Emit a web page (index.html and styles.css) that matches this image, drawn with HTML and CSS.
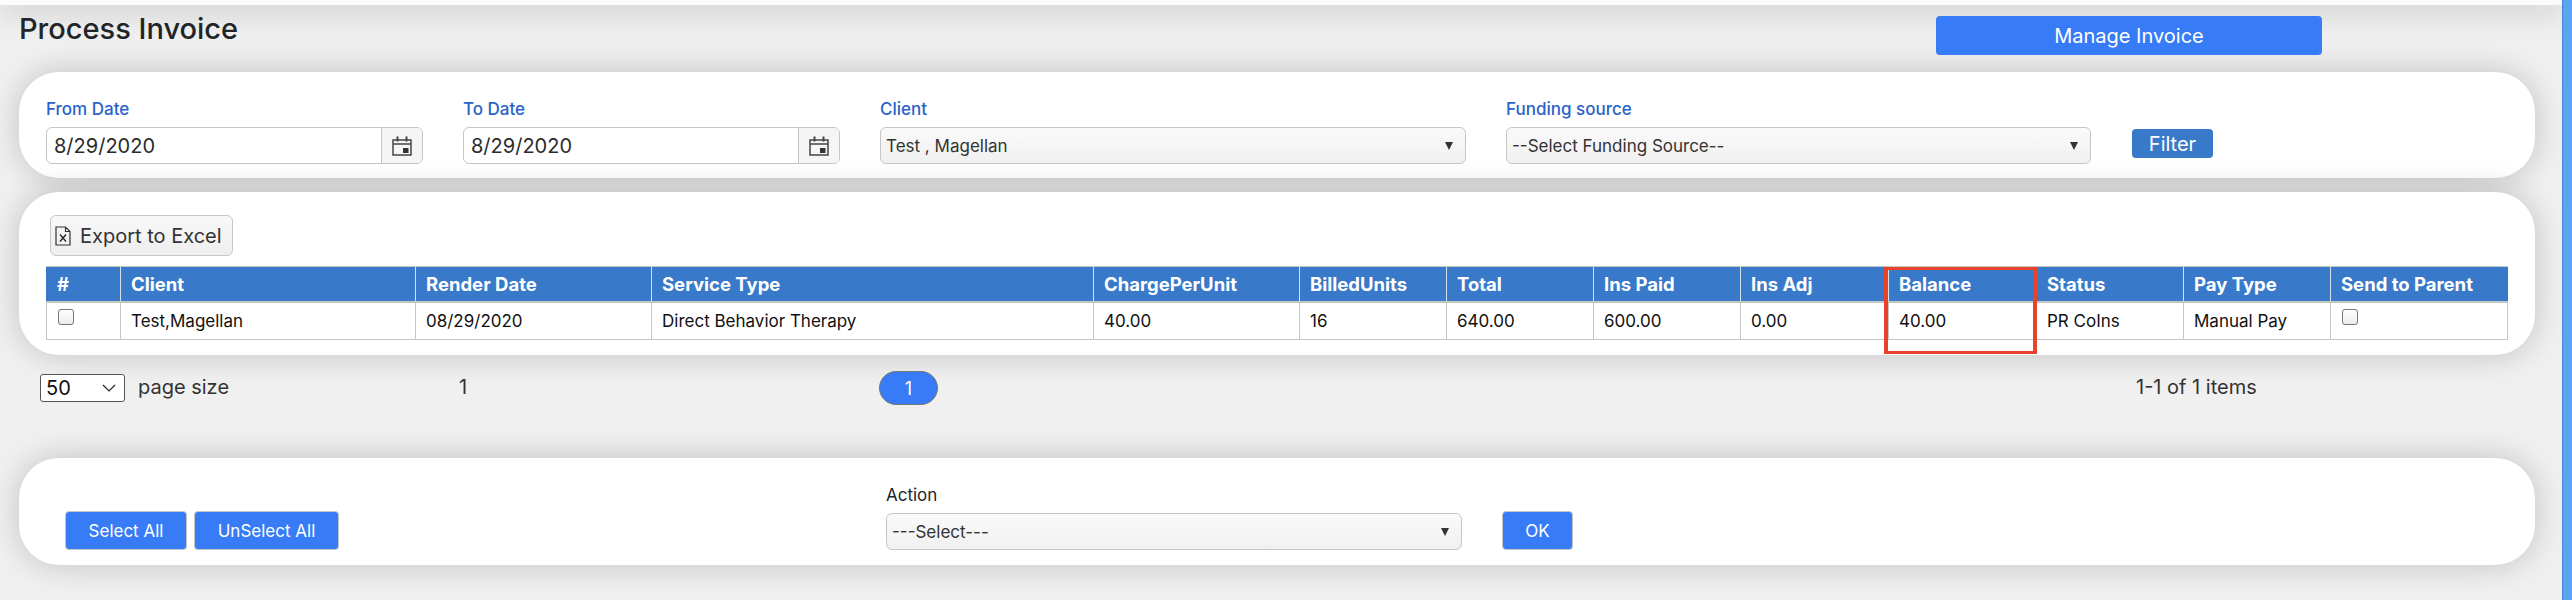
FILE: index.html
```html
<!DOCTYPE html>
<html lang="en">
<head>
<meta charset="utf-8">
<title>Process Invoice</title>
<link rel="stylesheet" href="styles.css">
</head>
<body>
<div class="app">
  <div class="main">
    <div class="topbar"></div>
    <header class="header">
      <h1 class="title">Process Invoice</h1>
      <button class="btn btn-manage" type="button">Manage Invoice</button>
    </header>

    <section class="panel panel-filter">
      <div class="field field-date">
        <label class="label label-blue">From Date</label>
        <div class="input-group">
          <input class="date-input" type="text" value="8/29/2020">
          <span class="addon">
            <svg class="cal" viewBox="0 0 20 20" width="20" height="20" aria-hidden="true">
              <path d="M1 4h18v15H1z M1 8h18" fill="none" stroke="#444" stroke-width="1.5"/>
              <path d="M5.5 0.5v5 M14.5 0.5v5" stroke="#444" stroke-width="2" fill="none"/>
              <rect x="11" y="12" width="5.5" height="5" fill="#333"/>
            </svg>
          </span>
        </div>
      </div>
      <div class="field field-date">
        <label class="label label-blue">To Date</label>
        <div class="input-group">
          <input class="date-input" type="text" value="8/29/2020">
          <span class="addon">
            <svg class="cal" viewBox="0 0 20 20" width="20" height="20" aria-hidden="true">
              <path d="M1 4h18v15H1z M1 8h18" fill="none" stroke="#444" stroke-width="1.5"/>
              <path d="M5.5 0.5v5 M14.5 0.5v5" stroke="#444" stroke-width="2" fill="none"/>
              <rect x="11" y="12" width="5.5" height="5" fill="#333"/>
            </svg>
          </span>
        </div>
      </div>
      <div class="field field-client">
        <label class="label label-blue">Client</label>
        <div class="select-wrap">
          <select class="select"><option>Test , Magellan</option></select>
        </div>
      </div>
      <div class="field field-funding">
        <label class="label label-blue">Funding source</label>
        <div class="select-wrap">
          <select class="select"><option>--Select Funding Source--</option></select>
        </div>
      </div>
      <button class="btn btn-filter" type="button">Filter</button>
    </section>

    <section class="panel panel-grid">
      <button class="btn-export" type="button">
        <svg viewBox="0 0 16 20" width="16" height="20" aria-hidden="true">
          <path d="M1 1h9.5l4.5 4.5V19H1z M10.5 1v4.5H15" fill="none" stroke="#333" stroke-width="1.2"/>
          <path d="M5 8.5l6 7 M11 8.5l-6 7" fill="none" stroke="#222" stroke-width="1.3"/>
        </svg>
        <span>Export to Excel</span>
      </button>
      <div class="table-wrap">
        <table class="grid">
          <thead>
            <tr>
              <th>#</th><th>Client</th><th>Render Date</th><th>Service Type</th><th>ChargePerUnit</th><th>BilledUnits</th><th>Total</th><th>Ins Paid</th><th>Ins Adj</th><th>Balance</th><th>Status</th><th>Pay Type</th><th>Send to Parent</th>
            </tr>
          </thead>
          <tbody>
            <tr>
              <td><input class="check" type="checkbox"></td>
              <td>Test,Magellan</td>
              <td>08/29/2020</td>
              <td>Direct Behavior Therapy</td>
              <td>40.00</td>
              <td>16</td>
              <td>640.00</td>
              <td>600.00</td>
              <td>0.00</td>
              <td>40.00</td>
              <td>PR CoIns</td>
              <td>Manual Pay</td>
              <td><input class="check" type="checkbox"></td>
            </tr>
          </tbody>
        </table>
        <div class="highlight"></div>
      </div>
    </section>

    <div class="pager">
      <div class="pager-size">
        <div class="size-select">
          <span>50</span>
          <svg viewBox="0 0 14 8" width="14" height="8" aria-hidden="true"><path d="M1 1l6 6 6-6" fill="none" stroke="#222" stroke-width="1.2"/></svg>
        </div>
        <span class="pager-text">page size</span>
      </div>
      <div class="pager-text">1</div>
      <div><button class="page-btn" type="button">1</button></div>
      <div class="pager-text">1-1 of 1 items</div>
    </div>

    <section class="panel panel-action">
      <button class="btn btn-small btn-select" type="button">Select All</button>
      <button class="btn btn-small btn-unselect" type="button">UnSelect All</button>
      <div class="field field-action">
        <label class="label">Action</label>
        <div class="select-wrap">
          <select class="select"><option>---Select---</option></select>
        </div>
      </div>
      <button class="btn btn-small btn-ok" type="button">OK</button>
    </section>
  </div>
  <div class="scrollbar"></div>
</div>
</body>
</html>
```
FILE: styles.css
```css
* { box-sizing: border-box; }
html, body { margin: 0; padding: 0; height: 600px; overflow: hidden; }
body { font-family: Inter, "Liberation Sans", sans-serif; color: #212529; background: #f0f0f0; }

.app { display: flex; width: 2572px; height: 600px; }
.main { width: 2562px; flex: none; background: #f0f0f0; }
.scrollbar { width: 10px; flex: none; background: #5aa6ee; border-left: 1px solid #3f86dd; }

.topbar { height: 5px; background: #fbfbfb; box-shadow: 0 2px 28px rgba(0, 0, 0, .5); }

.header { display: flex; height: 67px; align-items: flex-start; }
.title { margin: 6px 0 0 19px; font-size: 29px; line-height: 36px; font-weight: 500; color: #212529; }
.btn {
  border: 1px solid transparent; border-radius: 4px; background: #377bf7; color: #fff;
  font-family: inherit; padding: 0; cursor: pointer;
}
.btn-manage { margin: 11px 240px 0 auto; width: 386px; height: 39px; font-size: 20px; }

.panel { width: 2516px; margin-left: 19px; background: #fff; border-radius: 40px; box-shadow: 0 0 32px rgba(0, 0, 0, .2); }
.panel-filter { height: 106px; display: flex; align-items: flex-end; padding: 0 0 14px 27px; margin-bottom: 14px; }
.field { display: flex; flex-direction: column; flex: none; }
.field-date { width: 377px; margin-right: 40px; }
.field-client { width: 586px; margin-right: 40px; }
.field-funding { width: 585px; margin-right: 41px; }
.label { font-size: 17px; line-height: 20px; margin-bottom: 8px; }
.label-blue { color: #2a62c9; font-weight: 500; }

.input-group { display: flex; height: 37px; border: 1px solid #c6c6c6; border-radius: 6px; overflow: hidden; background: #fff; }
.date-input { flex: 1; min-width: 0; border: 0; outline: 0; padding: 1px 0 0 7px; font-family: inherit; font-size: 20px; color: #2b2b2b; background: transparent; }
.addon { width: 41px; flex: none; display: flex; align-items: center; justify-content: center; background: #f5f5f5; border-left: 1px solid #c6c6c6; }

.select-wrap { position: relative; }
.select-wrap::after {
  content: ""; position: absolute; right: 13px; top: 15px;
  border-left: 4px solid transparent; border-right: 4px solid transparent; border-top: 8px solid #333;
}
.select {
  display: block; width: 100%; height: 37px; appearance: none; -webkit-appearance: none;
  border: 1px solid #c6c6c6; border-radius: 6px; padding: 0 24px 0 5px;
  font-family: inherit; font-size: 17px; color: #333;
  background: linear-gradient(#fafafa, #f0f0f0);
}
.btn-filter { width: 81px; height: 29px; margin-bottom: 6px; background: #3879c9; font-size: 20px; flex: none; }

.panel-grid { height: 163px; padding: 23px 0 0 27px; }
.btn-export {
  display: flex; align-items: center; gap: 9px; width: 183px; height: 41px; margin: 0 0 10px 4px; padding: 0 0 0 4px;
  border: 1px solid #c6c6c6; border-radius: 6px; background: linear-gradient(#f8f8f8, #eeeeee);
  font-family: inherit; font-size: 20px; color: #333;
}
.table-wrap { position: relative; width: 2461px; }
.grid { border-collapse: collapse; table-layout: fixed; width: 2461px; font-size: 17px; }
.grid th {
  height: 35px; padding: 0 10px; text-align: left; background: #3879c9; color: #fff; font-weight: 700; font-size: 18.5px;
  border-left: 1px solid #d5e1f0; border-bottom: 2px solid #c6c6c6; border-top: 1px solid #c6c6c6;
}
.grid td { height: 38px; padding: 0 10px; color: #111; border: 1px solid #c6c6c6; border-top: 0; }
.grid th:first-child { border-left-color: #3879c9; }
.grid th:nth-child(1) { width: 74px; }
.grid th:nth-child(2) { width: 295px; }
.grid th:nth-child(3) { width: 236px; }
.grid th:nth-child(4) { width: 442px; }
.grid th:nth-child(5) { width: 206px; }
.grid th:nth-child(6) { width: 147px; }
.grid th:nth-child(7) { width: 147px; }
.grid th:nth-child(8) { width: 147px; }
.grid th:nth-child(9) { width: 148px; }
.grid th:nth-child(10) { width: 148px; }
.grid th:nth-child(11) { width: 147px; }
.grid th:nth-child(12) { width: 147px; }
.grid th:nth-child(13) { width: 177px; }
.check {
  appearance: none; -webkit-appearance: none; display: block; width: 16px; height: 16px; margin: -8px 0 0 1px;
  border: 1px solid #767676; border-radius: 3px; background: linear-gradient(#fff, #ececec);
}
.highlight { position: absolute; left: 1838px; top: 1px; width: 153px; height: 87px; border-style: solid; border-width: 3px 4px; border-color: #e8432a; }

.pager { display: grid; grid-template-columns: 419px 420px 1257px 1fr; height: 34px; margin: 16px 0 53px 40px; align-items: start; }
.pager-size { display: flex; align-items: center; gap: 13px; }
.size-select {
  display: flex; align-items: center; justify-content: space-between; width: 85px; height: 28px; padding: 0 8px 0 5px;
  background: #fff; border: 1px solid #555; border-radius: 3px; font-size: 20px; color: #111;
}
.pager-text { font-size: 20px; line-height: 33px; color: #333; }
.page-btn { display: block; width: 59px; height: 34px; border: 1px solid #777; border-radius: 17px; background: #377bf7; color: #fff; font-family: inherit; font-size: 18px; padding: 0; }

.panel-action { height: 107px; display: flex; align-items: flex-end; padding: 0 0 15px 46px; }
.btn-small { height: 39px; font-size: 17px; border-color: #c6c6c6; flex: none; }
.btn-select { width: 122px; margin-right: 7px; }
.btn-unselect { width: 145px; margin-right: 547px; }
.field-action { width: 576px; margin-right: 40px; }
.btn-ok { width: 71px; }
```
